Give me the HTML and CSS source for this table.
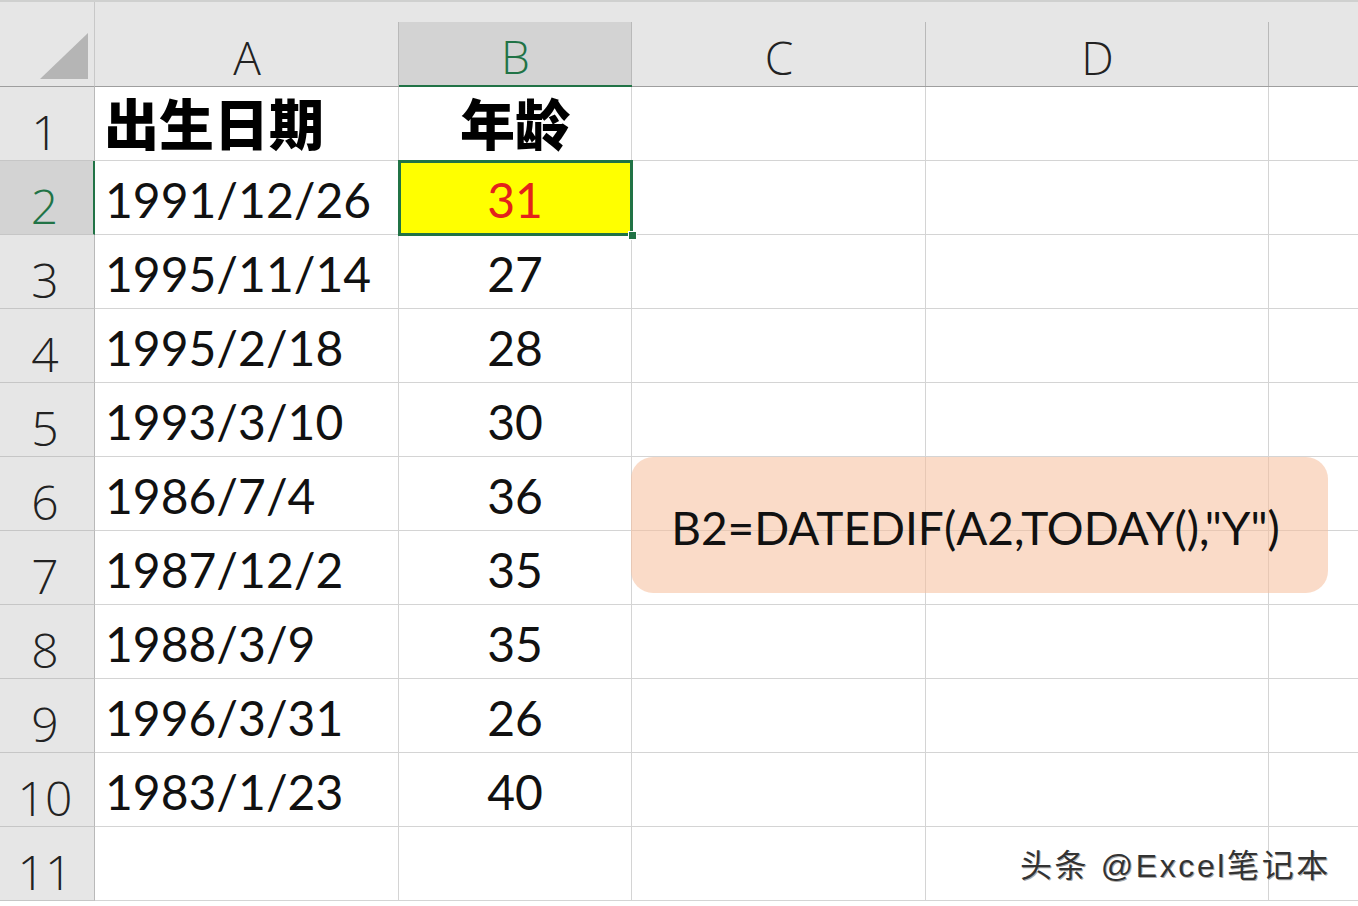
FILE: index.html
```html
<!DOCTYPE html>
<html lang="zh-CN">
<head>
<meta charset="utf-8">
<title>DATEDIF</title>
<link rel="stylesheet" href="styles.css">
</head>
<body>
<div class="sheet">
  <div class="grid">
    <div class="corner"><span class="tri"></span></div>
    <div class="colh">A</div>
    <div class="colh sel">B</div>
    <div class="colh">C</div>
    <div class="colh">D</div>
    <div class="colh last"></div>

    <div class="rowh">1</div>
    <div class="cell hd">出生日期</div>
    <div class="cell hd ctr">年龄</div>
    <div class="cell"></div><div class="cell"></div><div class="cell last"></div>

    <div class="rowh sel">2</div>
    <div class="cell">1991/12/26</div>
    <div class="cell ctr active"><span class="red">31</span><span class="handle"></span></div>
    <div class="cell"></div><div class="cell"></div><div class="cell last"></div>

    <div class="rowh">3</div>
    <div class="cell">1995/11/14</div>
    <div class="cell ctr">27</div>
    <div class="cell"></div><div class="cell"></div><div class="cell last"></div>

    <div class="rowh">4</div>
    <div class="cell">1995/2/18</div>
    <div class="cell ctr">28</div>
    <div class="cell"></div><div class="cell"></div><div class="cell last"></div>

    <div class="rowh">5</div>
    <div class="cell">1993/3/10</div>
    <div class="cell ctr">30</div>
    <div class="cell"></div><div class="cell"></div><div class="cell last"></div>

    <div class="rowh">6</div>
    <div class="cell">1986/7/4</div>
    <div class="cell ctr">36</div>
    <div class="cell"></div><div class="cell"></div><div class="cell last"></div>

    <div class="rowh">7</div>
    <div class="cell">1987/12/2</div>
    <div class="cell ctr">35</div>
    <div class="cell"></div><div class="cell"></div><div class="cell last"></div>

    <div class="rowh">8</div>
    <div class="cell">1988/3/9</div>
    <div class="cell ctr">35</div>
    <div class="cell"></div><div class="cell"></div><div class="cell last"></div>

    <div class="rowh">9</div>
    <div class="cell">1996/3/31</div>
    <div class="cell ctr">26</div>
    <div class="cell"></div><div class="cell"></div><div class="cell last"></div>

    <div class="rowh">10</div>
    <div class="cell">1983/1/23</div>
    <div class="cell ctr">40</div>
    <div class="cell"></div><div class="cell"></div><div class="cell last"></div>

    <div class="rowh">11</div>
    <div class="cell"></div>
    <div class="cell"></div>
    <div class="cell"></div><div class="cell"></div><div class="cell last"></div>
  </div>

  <div class="formula">B2=DATEDIF(A2,TODAY(),"Y")</div>
  <div class="watermark">头条 @Excel笔记本</div>
</div>
</body>
</html>
```

FILE: styles.css
```css
* { box-sizing: border-box; }

html, body {
  margin: 0;
  padding: 0;
  background: #ffffff;
  overflow: hidden;
}

.sheet {
  position: relative;
  width: 1358px;
  height: 906px;
  overflow: hidden;
  border-top: 2px solid #cfd0cf;
}

.grid {
  display: grid;
  grid-template-columns: 95px 304px 233px 294px 343px 1fr;
  grid-template-rows: 85px repeat(11, 74px);
}

.corner {
  background: #e6e6e6;
  border-bottom: 1px solid #9e9e9e;
  border-right: 1px solid #c8c8c8;
  position: relative;
}

.tri {
  position: absolute;
  left: 40px;
  top: 31px;
  width: 0;
  height: 0;
  border-style: solid;
  border-width: 0 0 46px 48px;
  border-color: transparent transparent #b5b5b5 transparent;
}

.colh {
  background: #e6e6e6;
  border-bottom: 1px solid #9e9e9e;
  display: flex;
  align-items: flex-end;
  justify-content: center;
  padding-bottom: 6px;
  font-family: "Open Sans", "Noto Sans", sans-serif;
  font-weight: 300;
  font-size: 46px;
  line-height: 1;
  color: #222;
  position: relative;
}

.colh::after {
  content: "";
  position: absolute;
  right: 0;
  top: 20px;
  bottom: 0;
  width: 1px;
  background: #b9b9b9;
}

.colh.last::after { display: none; }

.colh.sel {
  background: linear-gradient(#e6e6e6 0 20px, #d3d3d3 20px);
  color: #217346;
  border-bottom: 2px solid #217346;
}

.rowh {
  background: #e6e6e6;
  border-bottom: 1px solid #c6c6c6;
  border-right: 1px solid #b9b9b9;
  display: flex;
  align-items: flex-end;
  justify-content: center;
  padding: 0 4px 4px 0;
  font-family: "Open Sans", "Noto Sans", sans-serif;
  font-weight: 300;
  font-size: 48px;
  line-height: 1;
  color: #222;
}

.rowh.sel {
  background: #d3d3d3;
  color: #217346;
  border-right: 2px solid #217346;
}

.cell {
  border-right: 1px solid #d4d4d4;
  border-bottom: 1px solid #d4d4d4;
  display: flex;
  align-items: flex-end;
  padding: 0 0 10px 10px;
  font-family: Lato, "Noto Sans CJK SC", sans-serif;
  font-size: 48px;
  line-height: 1;
  color: #111;
  position: relative;
}

.cell.last { border-right: none; }

.cell.ctr {
  justify-content: center;
  padding-left: 0;
}

.cell.hd {
  font-family: "Noto Sans CJK SC", sans-serif;
  font-weight: 900;
  font-size: 55px;
  padding-bottom: 11px;
  padding-left: 9px;
  color: #000;
}

.cell.hd.ctr { padding-left: 0; }

.cell.active {
  background: #ffff00;
  outline: 3px solid #217346;
  outline-offset: -2px;
  z-index: 2;
}

.red { color: #e3221b; }

.handle {
  position: absolute;
  right: -6px;
  bottom: -6px;
  width: 9px;
  height: 9px;
  background: #217346;
  border: 1px solid #ffffff;
}

.formula {
  position: absolute;
  left: 631px;
  top: 455px;
  width: 697px;
  height: 136px;
  border-radius: 22px;
  background: rgba(246, 190, 154, 0.55);
  display: flex;
  align-items: center;
  justify-content: center;
  padding: 4px 8px 0 0;
  font-family: Lato, sans-serif;
  font-size: 46px;
  color: #111;
  z-index: 3;
}

.watermark {
  position: absolute;
  left: 1020px;
  top: 838px;
  font-family: "Liberation Sans", "Noto Sans CJK SC", sans-serif;
  font-size: 32px;
  letter-spacing: 2.6px;
  color: #333;
  text-shadow: -1px -1px 0 #ffffff, 1px 1px 0 #aaa;
  z-index: 4;
  white-space: nowrap;
}
```
